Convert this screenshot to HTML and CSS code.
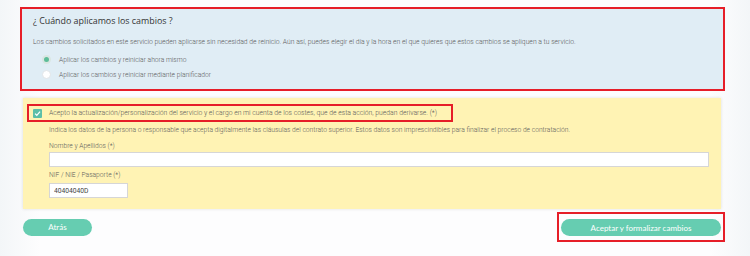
FILE: index.html
```html
<!DOCTYPE html>
<html lang="es">
<head>
    <meta charset="UTF-8">
    <meta name="viewport" content="width=device-width, initial-scale=1.0">
    <title>Cambios en el servicio</title>
    <link rel="stylesheet" href="styles.css">
</head>
<body>
    <div class="wrap">
        <div class="when">
            <h2>¿ Cuándo aplicamos los cambios ?</h2>
            <p class="intro">Los cambios solicitados en este servicio pueden aplicarse sin necesidad de reinicio. Aún así, puedes elegir el día y la hora en el que quieres que estos cambios se apliquen a tu servicio.</p>
            <ul class="options">
                <li><span class="radio checked"></span>Aplicar los cambios y reiniciar ahora mismo</li>
                <li><span class="radio"></span>Aplicar los cambios y reiniciar mediante planificador</li>
            </ul>
        </div>

        <div class="accept">
            <div class="consent">
                <span class="check">
                    <svg width="7" height="7" viewBox="0 0 10 10"><path d="M1.5 5.2 L4 7.6 L8.6 2.4" fill="none" stroke="#fff" stroke-width="1.8"/></svg>
                </span>
                Acepto la actualización/personalización del servicio y el cargo en mi cuenta de los costes, que de esta acción, puedan derivarse. (*)
            </div>
            <div class="fields">
                <p class="note">Indica los datos de la persona o responsable que acepta digitalmente las cláusulas del contrato superior. Estos datos son imprescindibles para finalizar el proceso de contratación.</p>
                <label class="lbl">Nombre y Apellidos (*)</label>
                <input class="field wide" type="text">
                <label class="lbl lbl-nif">NIF / NIE / Pasaporte (*)</label>
                <input class="field short" type="text" value="40404040D">
            </div>
        </div>

        <div class="actions">
            <button class="btn back">Atrás</button>
            <div class="mark">
                <button class="btn go">Aceptar y formalizar cambios</button>
            </div>
        </div>
    </div>
</body>
</html>
```
FILE: styles.css
```css
body {
    margin: 0;
    padding-top: 7px;
    font-family: Roboto, "Liberation Sans", sans-serif;
    font-weight: 300;
    color: #5a5a5a;
    background: linear-gradient(to right, #f3f6f8 0px, #fdfdfe 40px, #fdfdfe 710px, #f3f6f8 750px);
    height: 249px;
}

.wrap {
    margin-left: 20px;
    width: 705px;
}

.when {
    border: 2px solid #e61e28;
    background-color: #e0edf5;
    padding: 5px 11px 7px;
}

.when h2 {
    margin: 0;
    font-family: "Open Sans", sans-serif;
    font-weight: 400;
    font-size: 8.9px;
    line-height: 14px;
    color: #333;
}

.intro {
    margin: 9px 0 0;
    font-size: 6.8px;
    line-height: 10px;
}

.options {
    list-style: none;
    margin: 5px 0 0;
    padding: 0 0 0 9px;
}

.options li {
    display: flex;
    align-items: center;
    height: 15px;
    font-size: 6.7px;
}

.radio {
    flex-shrink: 0;
    width: 9px;
    height: 9px;
    border-radius: 50%;
    background: #fff;
    border: 1px solid #e1e5e8;
    box-sizing: border-box;
    margin-right: 8px;
}

.radio.checked {
    background: #5cbd98;
    border: 2px solid #d9e6e2;
}

.accept {
    margin: 7px 0 0 3px;
    width: 698px;
    background-color: #fff3b4;
    box-shadow: 0 0 3px rgba(0, 0, 0, 0.12);
    padding: 6px 12px 11px 4px;
    box-sizing: border-box;
}

.consent {
    display: flex;
    align-items: center;
    width: 426px;
    height: 18px;
    box-sizing: border-box;
    border: 2px solid #e61e28;
    padding-left: 4px;
    font-size: 6.8px;
}

.check {
    flex-shrink: 0;
    display: flex;
    align-items: center;
    justify-content: center;
    width: 9px;
    height: 9px;
    background: #5cbfa8;
    border-radius: 1px;
    margin-right: 7px;
}

.fields {
    padding-left: 22px;
}

.note {
    margin: 3px 0 0;
    font-size: 6.7px;
    line-height: 10px;
}

.lbl {
    display: block;
    margin-top: 6px;
    font-size: 6.7px;
    line-height: 10px;
}

.lbl-nif {
    margin-top: 3px;
}

.field {
    display: block;
    height: 15px;
    box-sizing: border-box;
    border: 1px solid #d6d6d6;
    background: #fff;
    margin-top: 1px;
    padding: 0 4px;
    font-family: Roboto, sans-serif;
    font-size: 6.7px;
    color: #444;
}

.wide {
    width: 660px;
}

.short {
    width: 79px;
    margin-top: 3px;
}

.actions {
    display: flex;
    justify-content: space-between;
    align-items: center;
    margin: 3px 0 0 3px;
    width: 702px;
}

.btn {
    height: 17px;
    border: none;
    border-radius: 9px;
    background-color: #66cdb1;
    color: #fff;
    font-family: Lato, sans-serif;
    font-size: 8px;
    cursor: pointer;
}

.back {
    width: 69px;
}

.mark {
    border: 2px solid #e61e28;
    padding: 5px 2px 4px;
}

.go {
    display: block;
    width: 160px;
}
```
